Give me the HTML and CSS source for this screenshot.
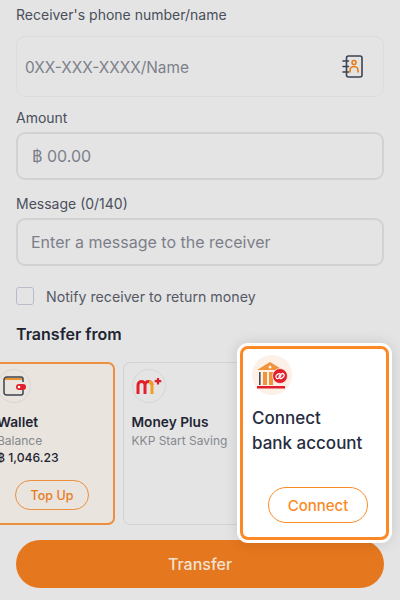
FILE: index.html
```html
<!DOCTYPE html>
<html lang="en">
<head>
    <meta charset="UTF-8">
    <meta name="viewport" content="width=device-width, initial-scale=1.0">
    <title>Transfer</title>
    <link rel="stylesheet" href="styles.css">
</head>
<body>
    <div class="page">
        <div class="form-label first">Receiver's phone number/name</div>
        <div class="field field-phone">
            <span class="placeholder phone-text">0XX-XXX-XXXX/Name</span>
            <svg width="21" height="23" viewBox="0 0 21 23" fill="none">
                <rect x="4.500" y="1" width="15.500" height="21" rx="2" stroke="#3b4252" stroke-width="1.600"/>
                <path d="M1 6h5.500M1 11.500h5.500M1 17h5.500" stroke="#3b4252" stroke-width="1.600" stroke-linecap="round"/>
                <circle cx="12" cy="7.500" r="2" stroke="#ea7a12" stroke-width="1.500"/>
                <path d="M8 17v-1.500a4 4 0 0 1 8 0V17" stroke="#ea7a12" stroke-width="1.600" stroke-linecap="round"/>
            </svg>
        </div>

        <div class="form-label amount-label">Amount</div>
        <div class="field field-strong">
            <span class="placeholder">฿ 00.00</span>
        </div>

        <div class="form-label">Message (0/140)</div>
        <div class="field field-strong field-message">
            <span class="placeholder">Enter a message to the receiver</span>
        </div>

        <div class="check-row">
            <span class="checkbox"></span>
            <span class="check-text">Notify receiver to return money</span>
        </div>

        <div class="section-title">Transfer from</div>

        <div class="card-row">
            <div class="card card-selected">
                <div class="logo-circle">
                    <svg width="23" height="20" viewBox="0 0 23 20" fill="none">
                        <path d="M1 4V16.500A2.500 2.500 0 0 0 3.500 19H18a2 2 0 0 0 2-2v-3" stroke="#3b4252" stroke-width="1.500"/>
                        <path d="M1 4a3 3 0 0 1 3-3h14a2 2 0 0 1 2 2v3" stroke="#3b4252" stroke-width="1.500"/>
                        <path d="M2 3h17" stroke="#e8891c" stroke-width="1.800"/>
                        <rect x="13" y="8" width="10" height="6" rx="3" fill="#e2202c"/>
                        <circle cx="16" cy="11" r="1.300" fill="#fff"/>
                    </svg>
                </div>
                <div class="card-name">Wallet</div>
                <div class="card-sub">Balance</div>
                <div class="card-amount">฿ 1,046.23</div>
                <div class="pill-btn topup">Top Up</div>
            </div>
            <div class="card">
                <div class="logo-circle">
                    <svg width="26" height="18" viewBox="0 0 26 18" fill="none">
                        <path d="M2 17V8a3.500 3.500 0 0 1 7 0v9M9 8a3.500 3.500 0 0 1 7 0" stroke="#e2202c" stroke-width="3"/>
                        <path d="M13 4.700A3.500 3.500 0 0 1 16 8v9" stroke="#f0a020" stroke-width="3"/>
                        <path d="M22 1v6.500M18.700 4.200h6.600" stroke="#e2202c" stroke-width="2.200"/>
                    </svg>
                </div>
                <div class="card-name">Money Plus</div>
                <div class="card-sub">KKP Start Saving</div>
            </div>
        </div>

        <div class="transfer-btn">Transfer</div>

        <div class="connect-card">
            <div class="connect-inner">
                <div class="bank-circle">
                    <svg width="32" height="28" viewBox="0 0 32 28" fill="none">
                        <path d="M1 9 14 1l13 8z" fill="#f0933a"/>
                        <circle cx="14" cy="6" r="1.500" fill="#fdf0e6"/>
                        <rect x="3" y="11" width="1.600" height="13" fill="#4a4a55"/>
                        <rect x="7" y="11" width="4" height="13" fill="#f0933a"/>
                        <rect x="13" y="11" width="4" height="13" fill="#f0933a"/>
                        <rect x="1" y="25" width="28" height="2.500" fill="#e2202c"/>
                        <circle cx="24" cy="15" r="7.500" fill="#e2202c" stroke="#fdf0e6" stroke-width="0.800"/>
                        <rect x="19.500" y="13.500" width="5.500" height="3.600" rx="1.800" stroke="#fff" stroke-width="1.200" transform="rotate(-40 22 15)"/>
                        <rect x="23" y="13" width="5.500" height="3.600" rx="1.800" stroke="#fff" stroke-width="1.200" transform="rotate(-40 26 15)"/>
                    </svg>
                </div>
                <div class="connect-title">Connect<br>bank account</div>
                <div class="pill-btn connect-btn">Connect</div>
            </div>
        </div>
    </div>
</body>
</html>
```

FILE: styles.css
```css
body {
    margin: 0;
    font-family: Inter, "Liberation Sans", sans-serif;
    background-color: #e4e4e4;
    color: #4a4f5c;
}
.page {
    position: relative;
    width: 400px;
    height: 600px;
    padding: 0 16px;
    box-sizing: border-box;
    overflow: hidden;
}
.form-label {
    font-size: 14px;
    line-height: 18px;
    margin-top: 15px;
    margin-bottom: 5px;
}
.form-label.first {
    margin-top: 6px;
    margin-bottom: 12px;
}
.form-label.amount-label {
    margin-top: 12px;
}
.field {
    display: flex;
    align-items: center;
    justify-content: space-between;
    height: 48px;
    box-sizing: border-box;
    padding: 0 14px;
    border: 1.5px solid #d6d6d8;
    border-radius: 9px;
}
.field-phone {
    height: 61px;
    padding: 0 20px 0 8px;
    border-color: #dcdcde;
}
.field-strong {
    border: 2px solid #d2d2d4;
}
.field-message {
    padding: 0 13px;
}
.placeholder {
    font-size: 16px;
    color: #7c7f8a;
}
.phone-text {
    margin-top: 2px;
    font-size: 15.400px;
}
.check-row {
    display: flex;
    align-items: center;
    gap: 12px;
    margin-top: 21px;
}
.checkbox {
    width: 18px;
    height: 18px;
    box-sizing: border-box;
    border: 1.5px solid #b8bccb;
    border-radius: 3px;
}
.check-text {
    font-size: 14.200px;
    color: #555966;
}
.section-title {
    font-size: 16px;
    font-weight: 600;
    color: #1f2433;
    margin-top: 19px;
    line-height: 20px;
}
.card-row {
    display: flex;
    gap: 8px;
    margin-top: 18px;
    margin-left: -29px;
    width: 400px;
}
.card {
    flex: none;
    width: 128px;
    height: 163px;
    box-sizing: border-box;
    padding: 5.500px 7.500px;
    border: 1.5px solid #d2d2d4;
    border-radius: 7px;
}
.card-selected {
    padding: 5px 8px;
    background-color: #e9e4dd;
    border: 2px solid #ec8f3e;
}
.logo-circle {
    display: flex;
    align-items: center;
    justify-content: center;
    width: 32px;
    height: 32px;
    border: 1px solid #d6d6d8;
    border-radius: 50%;
}
.card-name {
    font-size: 13.700px;
    font-weight: 600;
    color: #1f2433;
    margin-top: 10px;
    line-height: 18px;
}
.card-sub {
    font-size: 12px;
    color: #85888f;
    margin-top: 3px;
    line-height: 14px;
}
.card-amount {
    font-size: 12.200px;
    font-weight: 500;
    color: #1f2433;
    margin-top: 2px;
    line-height: 16px;
}
.pill-btn {
    display: flex;
    align-items: center;
    justify-content: center;
    box-sizing: border-box;
    font-weight: 500;
}
.topup {
    width: 74px;
    height: 30px;
    margin: 14px 0 0 18px;
    border: 1.500px solid #ec8f3e;
    border-radius: 15px;
    color: #e87c1e;
    font-size: 12.500px;
}
.transfer-btn {
    display: flex;
    align-items: center;
    justify-content: center;
    height: 48px;
    margin-top: 15px;
    background-color: #e5771e;
    border-radius: 24px;
    color: #f3e2d2;
    font-size: 16px;
    font-weight: 500;
}
/* highlighted card sits over the list */
.connect-card {
    position: absolute;
    left: 237px;
    top: 343px;
    width: 155px;
    height: 200px;
    box-sizing: border-box;
    padding: 3px;
    background-color: #fff;
    border-radius: 11px;
    box-shadow: 0 0 14px rgba(0,0,0,0.12);
}
.connect-inner {
    height: 100%;
    box-sizing: border-box;
    padding: 6px 9px;
    background-color: #fff;
    border: 3px solid #fb8a26;
    border-radius: 8px;
}
.bank-circle {
    display: flex;
    align-items: center;
    justify-content: center;
    width: 40px;
    height: 40px;
    background-color: #fdf0e6;
    border-radius: 50%;
}
.connect-title {
    font-size: 17px;
    font-weight: 500;
    line-height: 24.500px;
    color: #262c40;
    margin-top: 11px;
}
.connect-btn {
    width: 100px;
    height: 36px;
    margin: 32px 0 0 16px;
    border: 1.500px solid #fb8a26;
    border-radius: 18px;
    color: #fb8a26;
    font-size: 15px;
}
```
